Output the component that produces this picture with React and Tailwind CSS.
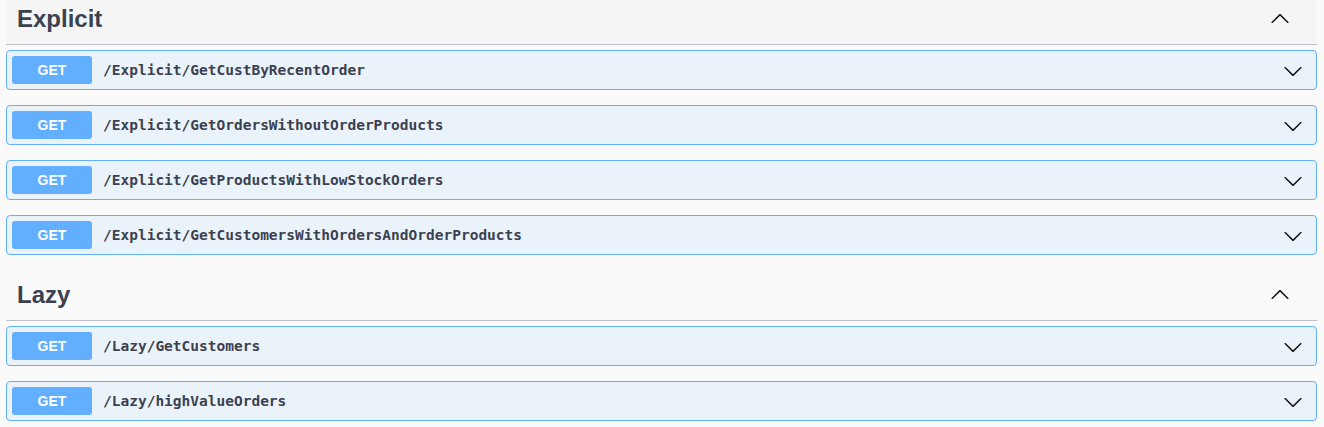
import React from "react";

const ARROW =
  "M17.418 6.109c.272-.268.709-.268.979 0s.271.701 0 .969l-7.908 7.83c-.27.268-.707.268-.979 0l-7.908-7.83c-.27-.268-.27-.701 0-.969.271-.268.709-.268.979 0L10 13.25l7.418-7.141z";

function Chevron({ up }) {
  return (
    <svg
      width="20"
      height="20"
      viewBox="0 0 20 20"
      className={up ? "rotate-180 shrink-0" : "shrink-0"}
      aria-hidden="true"
    >
      <path d={ARROW} fill="#111" />
    </svg>
  );
}

function Op({ path }) {
  return (
    <div className="mb-[15px] flex h-[40px] items-center rounded-[4px] border border-[#61affe] bg-[#ebf3fa] pl-[5px] pr-[6px]">
      <div className="flex h-[28px] w-[80px] shrink-0 items-center justify-center rounded-[3px] bg-[#61affe] pt-[1px] font-['Liberation_Sans',Arial,sans-serif] text-[14px] font-bold text-white">
        GET
      </div>
      <div className="ml-[11px] flex-1 pt-[2px] font-['DejaVu_Sans_Mono',monospace] text-[14.5px] font-bold text-[#3b4151]">
        {path}
      </div>
      <div className="mr-[7px] pt-[1px]">
        <Chevron />
      </div>
    </div>
  );
}

function Section({ title, ops, hover }) {
  return (
    <div className="mb-[21px]">
      <div
        className={
          "mb-[5px] flex h-[45px] items-center border-b border-[#bdbfc4] pb-[6px] pl-[11px] pr-[27px] " +
          (hover ? "bg-[#f5f5f5]" : "")
        }
      >
        <h3 className="flex-1 font-['Liberation_Sans',Arial,sans-serif] text-[24px] font-bold leading-[24px] text-[#3b4151]">
          {title}
        </h3>
        <Chevron up />
      </div>
      <div>
        {ops.map((p) => (
          <Op key={p} path={p} />
        ))}
      </div>
    </div>
  );
}

export default function App() {
  return (
    <div className="min-h-screen bg-[#fafafa] pl-[6px] pr-[7px]">
      <Section
        title="Explicit"
        hover
        ops={[
          "/Explicit/GetCustByRecentOrder",
          "/Explicit/GetOrdersWithoutOrderProducts",
          "/Explicit/GetProductsWithLowStockOrders",
          "/Explicit/GetCustomersWithOrdersAndOrderProducts",
        ]}
      />
      <Section
        title="Lazy"
        ops={["/Lazy/GetCustomers", "/Lazy/highValueOrders"]}
      />
    </div>
  );
}
